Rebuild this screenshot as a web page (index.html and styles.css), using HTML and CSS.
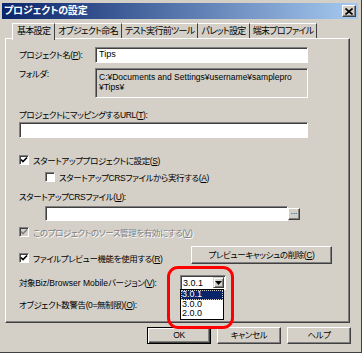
FILE: index.html
```html
<!DOCTYPE html>
<html lang="ja">
<head>
    <meta charset="UTF-8">
    <meta name="viewport" content="width=device-width, initial-scale=1.0">
    <title>プロジェクトの設定</title>
    <link rel="stylesheet" href="styles.css">
</head>
<body>
    <div class="window">
        <div class="titlebar">
            <span class="title">プロジェクトの設定</span>
            <span class="close-btn">
                <svg width="8" height="7" viewBox="0 0 8 7"><path d="M0.5 0.5 L7.5 6.5 M7.5 0.5 L0.5 6.5" stroke="#000" stroke-width="1.6"/></svg>
            </span>
        </div>
        <div class="content">
            <div class="tabs">
                <div class="tab active">基本設定</div>
                <div class="tab">オブジェクト命名</div>
                <div class="tab">テスト実行前ツール</div>
                <div class="tab">パレット設定</div>
                <div class="tab">端末プロファイル</div>
            </div>
            <div class="panel">
                <div class="row row-name">
                    <span class="label">プロジェクト名(<u>P</u>):</span>
                    <div class="textbox name-box">Tips</div>
                </div>
                <div class="row row-folder">
                    <span class="label">フォルダ:</span>
                    <div class="textbox readonly">C:¥Documents and Settings¥username¥samplepro<br>¥Tips¥</div>
                </div>
                <div class="label url-label">プロジェクトにマッピングするURL(<u>T</u>):</div>
                <div class="textbox url-box"></div>
                <div class="check-row cb-startup">
                    <span class="checkbox checked">
                        <svg width="8" height="8" viewBox="0 0 8 8"><path d="M1 3.5 L3 5.5 L7 1.5" fill="none" stroke="#000" stroke-width="1.6"/></svg>
                    </span>
                    <span>スタートアッププロジェクトに設定(<u>S</u>)</span>
                </div>
                <div class="check-row cb-crs">
                    <span class="checkbox"></span>
                    <span>スタートアップCRSファイルから実行する(<u>A</u>)</span>
                </div>
                <div class="label crs-label">スタートアップCRSファイル(<u>U</u>):</div>
                <div class="row crs-row">
                    <div class="textbox crs-box"></div>
                    <div class="btn browse-btn">...</div>
                </div>
                <div class="check-row cb-source disabled">
                    <span class="checkbox checked">
                        <svg width="8" height="8" viewBox="0 0 8 8"><path d="M1 3.5 L3 5.5 L7 1.5" fill="none" stroke="#808080" stroke-width="1.6"/></svg>
                    </span>
                    <span>このプロジェクトのソース管理を有効にする(<u>V</u>)</span>
                </div>
                <div class="row preview-row">
                    <div class="check-row">
                        <span class="checkbox checked">
                            <svg width="8" height="8" viewBox="0 0 8 8"><path d="M1 3.5 L3 5.5 L7 1.5" fill="none" stroke="#000" stroke-width="1.6"/></svg>
                        </span>
                        <span>ファイルプレビュー機能を使用する(<u>R</u>)</span>
                    </div>
                    <div class="btn cache-btn">プレビューキャッシュの削除(<u>C</u>)</div>
                </div>
                <div class="row version-row">
                    <span class="label version-label">対象<span class="latin">Biz/Browser Mobile</span>バージョン(<u>V</u>):</span>
                    <div class="combo">
                        <div class="combo-box">
                            <span class="combo-text">3.0.1</span>
                            <span class="combo-arrow">
                                <svg width="7" height="4" viewBox="0 0 7 4"><path d="M0 0 H7 L3.5 4 Z" fill="#000"/></svg>
                            </span>
                        </div>
                        <ul class="combo-list">
                            <li class="selected">3.0.1</li>
                            <li>3.0.0</li>
                            <li>2.0.0</li>
                        </ul>
                        <div class="highlight"></div>
                    </div>
                </div>
                <div class="label object-label">オブジェクト数警告(0=無制限)(<u>O</u>):</div>
            </div>
            <div class="dialog-buttons">
                <div class="btn dialog-btn default">OK</div>
                <div class="btn dialog-btn">キャンセル</div>
                <div class="btn dialog-btn">ヘルプ</div>
            </div>
        </div>
    </div>
</body>
</html>
```

FILE: styles.css
```css
body {
    margin: 0;
    padding: 0;
    background-color: #d4d0c8;
    font-family: "Liberation Sans", "Noto Sans CJK JP", sans-serif;
    font-size: 8.5px;
    letter-spacing: -0.4px;
    font-feature-settings: "palt";
    color: #000;
}

.window {
    width: 362px;
    height: 353px;
    box-sizing: border-box;
    padding: 3px 3px 0 2px;
    background-color: #d4d0c8;
    border-right: 1px solid #404040;
    border-bottom: 1px solid #404040;
}

.titlebar {
    height: 16px;
    display: flex;
    align-items: center;
    justify-content: space-between;
    padding: 0 2px 0 2px;
    background: linear-gradient(to right, #0a246a, #a6caf0);
}

.title {
    color: #fff;
    font-weight: bold;
    font-size: 10px;
    letter-spacing: -0.2px;
    line-height: 16px;
}

.close-btn {
    width: 12px;
    height: 10px;
    display: flex;
    align-items: center;
    justify-content: center;
    background-color: #d4d0c8;
    border: 1px solid;
    border-color: #fff #404040 #404040 #fff;
    box-shadow: inset -1px -1px #808080;
}

.content {
    padding: 0 8px 0 3px;
}

/* tabs */
.tabs {
    display: flex;
    margin: 4px 0 0 7px;
    height: 15px;
    position: relative;
    z-index: 1;
    font-size: 9px;
    letter-spacing: -0.7px;
}

.tab {
    padding: 0 3px;
    line-height: 14px;
    border-top: 1px solid #fff;
    border-right: 1px solid #404040;
    white-space: nowrap;
}

.tab.active {
    border-left: 1px solid #fff;
    padding: 0 4px;
    height: 16px;
    background-color: #d4d0c8;
}

/* main panel */
.panel {
    height: 285px;
    box-sizing: border-box;
    padding: 0 17px 0 13px;
    border: 1px solid;
    border-color: #fff #404040 #404040 #fff;
    box-shadow: inset -1px -1px #808080;
}

.row {
    display: flex;
}

.label {
    line-height: 12px;
    white-space: nowrap;
}

.latin {
    letter-spacing: 0;
}

.textbox {
    box-sizing: border-box;
    background-color: #fff;
    border: 1px solid;
    border-color: #808080 #fff #fff #808080;
    box-shadow: inset 1px 1px #404040;
    padding: 0 3px;
    line-height: 13px;
    letter-spacing: 0;
    white-space: nowrap;
}

.row-name {
    margin-top: 8px;
    align-items: center;
}

.row-name .label,
.row-folder .label {
    width: 76px;
}

.name-box {
    width: 213px;
    height: 16px;
    font-size: 9px;
}

.row-folder {
    margin-top: 5px;
}

.readonly {
    width: 213px;
    height: 30px;
    background-color: #d4d0c8;
    padding: 3px 3px;
    line-height: 10px;
}

.url-label {
    margin-top: 11px;
}

.url-box {
    margin-top: 1px;
    width: 289px;
    height: 16px;
}

.check-row {
    display: flex;
    align-items: center;
    height: 12px;
    white-space: nowrap;
}

.checkbox {
    width: 10px;
    height: 10px;
    box-sizing: border-box;
    display: flex;
    align-items: center;
    justify-content: center;
    margin-right: 4px;
    background-color: #fff;
    border: 1px solid;
    border-color: #808080 #fff #fff #808080;
    box-shadow: inset 1px 1px #404040;
}

.cb-startup {
    margin-top: 16px;
}

.cb-crs {
    margin-top: 5px;
    padding-left: 26px;
}

.crs-label {
    margin-top: 8px;
}

.crs-row {
    margin-top: 3px;
    align-items: center;
    padding-left: 26px;
}

.crs-box {
    width: 243px;
    height: 15px;
}

.btn {
    box-sizing: border-box;
    background-color: #d4d0c8;
    border: 1px solid;
    border-color: #fff #404040 #404040 #fff;
    box-shadow: inset -1px -1px #808080;
    text-align: center;
    white-space: nowrap;
}

.browse-btn {
    width: 12px;
    height: 12px;
    line-height: 6px;
    font-size: 8px;
    letter-spacing: 0;
}

.cb-source {
    margin-top: 5px;
}

.disabled {
    color: #808080;
    text-shadow: 1px 1px #fff;
}

.disabled .checkbox {
    background-color: #d4d0c8;
}

.preview-row {
    margin-top: 8px;
    height: 18px;
    align-items: flex-end;
}

.cache-btn {
    margin-left: auto;
    align-self: flex-start;
    width: 141px;
    height: 18px;
    line-height: 16px;
}

.version-row {
    margin-top: 11px;
    align-items: center;
}

.version-label {
    width: 161px;
}

.combo {
    position: relative;
}

.combo-box {
    width: 46px;
    height: 15px;
    box-sizing: border-box;
    display: flex;
    align-items: center;
    background-color: #fff;
    border: 1px solid;
    border-color: #808080 #fff #fff #808080;
    box-shadow: inset 1px 1px #404040;
}

.combo-text {
    flex: 1;
    padding-left: 2px;
    font-size: 9px;
    letter-spacing: 0;
    line-height: 12px;
}

.combo-arrow {
    width: 11px;
    height: 11px;
    box-sizing: border-box;
    margin-right: 1px;
    display: flex;
    align-items: center;
    justify-content: center;
    background-color: #d4d0c8;
    border: 1px solid;
    border-color: #d4d0c8 #404040 #404040 #d4d0c8;
    box-shadow: inset 1px 1px #fff, inset -1px -1px #808080;
}

.combo-list {
    position: absolute;
    top: 14px;
    left: 0;
    width: 44px;
    margin: 0;
    padding: 0;
    list-style: none;
    background-color: #fff;
    border: 1px solid #000;
    box-sizing: border-box;
    font-size: 9px;
    letter-spacing: 0;
    z-index: 2;
}

.combo-list li {
    height: 9.5px;
    line-height: 9.5px;
    padding-left: 1px;
}

.combo-list li.selected {
    background-color: #0a246a;
    color: #fff;
    outline: 1px dotted #d4d0c8;
    outline-offset: -1px;
}

.highlight {
    position: absolute;
    top: -9px;
    left: -13px;
    width: 67px;
    height: 63px;
    box-sizing: border-box;
    border: 3px solid #f00;
    border-radius: 11px;
    z-index: 3;
}

.object-label {
    margin-top: 9px;
}

/* bottom buttons */
.dialog-buttons {
    display: flex;
    justify-content: flex-end;
    gap: 6px;
    margin: 4px -1px 0 0;
}

.dialog-btn {
    width: 64px;
    height: 17px;
    line-height: 15px;
}

.dialog-btn.default {
    border-color: #000;
    box-shadow: inset 1px 1px #fff, inset -1px -1px #404040, inset -2px -2px #808080;
}
```
